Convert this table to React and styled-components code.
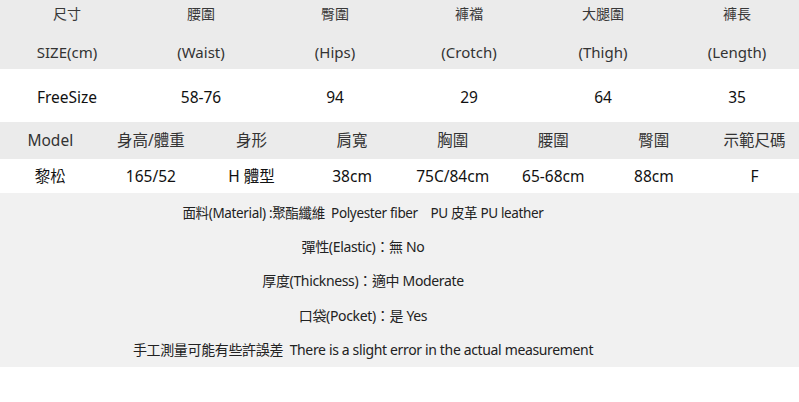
import styled, { createGlobalStyle } from "styled-components";

const GlobalStyle = createGlobalStyle`
  html, body {
    margin: 0;
    padding: 0;
    background: #ffffff;
  }
  body {
    font-family: "Noto Sans", "Noto Sans CJK TC", sans-serif;
    color: #222;
  }
`;

const sizeHead = [
  ["尺寸", "SIZE(cm)"],
  ["腰圍", "(Waist)"],
  ["臀圍", "(Hips)"],
  ["褲襠", "(Crotch)"],
  ["大腿圍", "(Thigh)"],
  ["褲長", "(Length)"],
];
const sizeValues = ["FreeSize", "58-76", "94", "29", "64", "35"];

const modelHead = ["Model", "身高/體重", "身形", "肩寬", "胸圍", "腰圍", "臀圍", "示範尺碼"];
const modelValues = ["黎松", "165/52", "H 體型", "38cm", "75C/84cm", "65-68cm", "88cm", "F"];

const notes = [
  { text: "面料(Material) :聚酯纖維  Polyester fiber    PU 皮革 PU leather", size: 13.5 },
  { text: "彈性(Elastic)：無 No", size: 14 },
  { text: "厚度(Thickness)：適中 Moderate", size: 14 },
  { text: "口袋(Pocket)：是 Yes", size: 14 },
  { text: "手工測量可能有些許誤差  There is a slight error in the actual measurement", size: 14 },
];

export default function App() {
  return (
    <Page>
      <GlobalStyle />
      <Row $cols={6} $bg="#ebebeb" $h={28} $pt={0}>
        {sizeHead.map((h) => (
          <Cell key={h[0]} $size={14} $color="#383838">{h[0]}</Cell>
        ))}
      </Row>
      <Row $cols={6} $bg="#ebebeb" $h={41} $pt={7}>
        {sizeHead.map((h) => (
          <Cell key={h[1]} $size={15} $color="#333" $lh={34}>{h[1]}</Cell>
        ))}
      </Row>
      <Row $cols={6} $bg="#ffffff" $h={53} $pt={3}>
        {sizeValues.map((v) => (
          <Cell key={v} $size={15.5} $color="#111" $lh={50}>{v}</Cell>
        ))}
      </Row>
      <Row $cols={8} $bg="#ebebeb" $h={37} $pt={0}>
        {modelHead.map((h, i) => (
          <Cell key={h + i} $size={15.5} $color="#333" $lh={37}>{h}</Cell>
        ))}
      </Row>
      <Row $cols={8} $bg="#ffffff" $h={34} $pt={1}>
        {modelValues.map((v) => (
          <Cell key={v} $size={15.5} $color="#111" $lh={33}>{v}</Cell>
        ))}
      </Row>
      <Notes>
        {notes.map((n) => (
          <Note key={n.text} $size={n.size}>{n.text}</Note>
        ))}
      </Notes>
    </Page>
  );
}

const Page = styled.div`
  width: 799px;
  height: 402px;
  background: #ffffff;
  overflow: hidden;
`;

const Row = styled.div`
  display: grid;
  grid-template-columns: ${({ $cols }) => ($cols === 6 ? "repeat(6, 134px)" : "repeat(8, 100.6px)")};
  height: ${({ $h }) => $h}px;
  box-sizing: border-box;
  padding-top: ${({ $pt }) => $pt}px;
  background: ${({ $bg }) => $bg};
`;

const Cell = styled.div`
  text-align: center;
  white-space: nowrap;
  font-size: ${({ $size }) => $size}px;
  line-height: ${({ $lh }) => $lh || 28}px;
  color: ${({ $color }) => $color};
`;

const Notes = styled.div`
  background: #f1f1f1;
  height: 174px;
  box-sizing: border-box;
  padding: 3px 73px 0 0;
  display: flex;
  flex-direction: column;
`;

const Note = styled.div`
  height: 34.2px;
  line-height: 34.2px;
  text-align: center;
  font-size: ${({ $size }) => $size}px;
  letter-spacing: -0.35px;
  color: #222;
  white-space: pre;
`;
